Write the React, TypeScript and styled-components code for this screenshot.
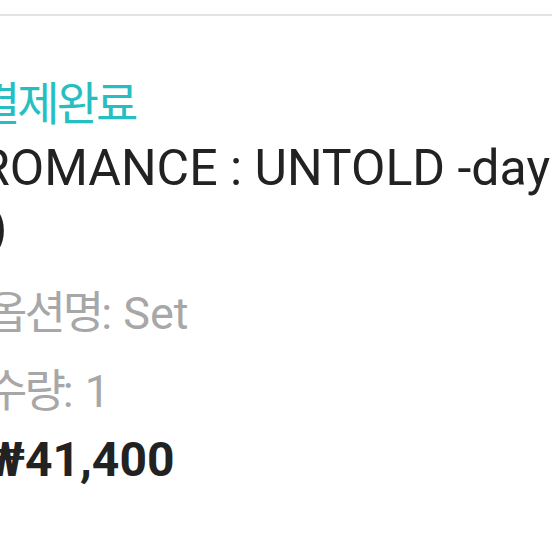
import React from 'react';
import styled, { createGlobalStyle } from 'styled-components';

const GlobalStyle = createGlobalStyle`
  html, body {
    margin: 0;
    padding: 0;
    background: #ffffff;
    overflow: hidden;
  }
  body {
    font-family: Roboto, "Noto Sans CJK KR", sans-serif;
  }
`;

const Page = styled.div`
  width: 552px;
  height: 552px;
  overflow: hidden;
  padding-top: 14px;
  box-sizing: border-box;
`;

const Divider = styled.div`
  height: 2px;
  background: #e3e3e3;
`;

const Card = styled.div`
  display: flex;
  flex-direction: column;
  margin-left: -14px;
  width: 700px;
  padding-top: 56px;
`;

const Status = styled.div`
  font-family: "Noto Sans CJK KR", sans-serif;
  font-size: 46px;
  line-height: 56px;
  color: #27bec1;
  letter-spacing: -3px;
  margin-left: -8px;
`;

const Title = styled.div`
  margin-top: 10px;
  font-size: 50px;
  line-height: 60px;
  color: #222222;
  white-space: nowrap;
`;

const TitleLine = styled.div<{ $indent?: number }>`
  margin-left: ${(p) => p.$indent ?? 0}px;
`;

const Meta = styled.div`
  margin-top: 15px;
  font-size: 45px;
  line-height: 74px;
  color: #a7a7a7;
  white-space: nowrap;
`;

const Label = styled.span`
  font-family: "Noto Sans CJK KR", sans-serif;
  letter-spacing: -3px;
`;

const Price = styled.div`
  margin-top: -4px;
  font-size: 48px;
  line-height: 70px;
  font-weight: 700;
  color: #222222;
`;

export default function App() {
  return (
    <>
      <GlobalStyle />
      <Page>
        <Divider />
        <Card>
          <Status>결제완료</Status>
          <Title>
            <TitleLine $indent={-7}>ROMANCE : UNTOLD -daydream-</TitleLine>
            <TitleLine $indent={4}>)</TitleLine>
          </Title>
          <Meta>
            <div>
              <Label>옵션명</Label>: Set
            </div>
            <div>
              <Label>수량</Label>: 1
            </div>
          </Meta>
          <Price>₩41,400</Price>
        </Card>
      </Page>
    </>
  );
}
